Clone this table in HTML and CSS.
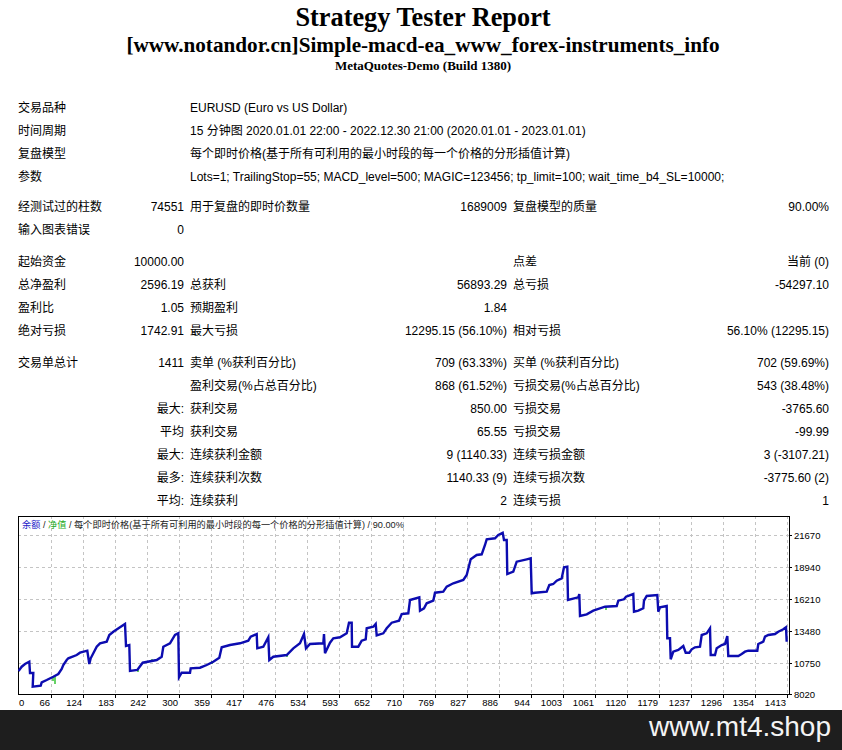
FILE: index.html
```html
<!DOCTYPE html>
<html lang="zh">
<head>
<meta charset="utf-8">
<title>Strategy Tester Report</title>
<link rel="stylesheet" href="styles.css">
</head>
<body>
<header class="report-head">
  <div class="title">Strategy Tester Report</div>
  <div class="subtitle">[www.notandor.cn]Simple-macd-ea_www_forex-instruments_info</div>
  <div class="server">MetaQuotes-Demo (Build 1380)</div>
</header>

<section class="stats">
  <div class="row"><span class="c l w2">交易品种</span><span class="c l w4">EURUSD (Euro vs US Dollar)</span></div>
  <div class="row"><span class="c l w2">时间周期</span><span class="c l w4">15 分钟图 2020.01.01 22:00 - 2022.12.30 21:00 (2020.01.01 - 2023.01.01)</span></div>
  <div class="row"><span class="c l w2">复盘模型</span><span class="c l w4">每个即时价格(基于所有可利用的最小时段的每一个价格的分形插值计算)</span></div>
  <div class="row"><span class="c l w2">参数</span><span class="c l w4">Lots=1; TrailingStop=55; MACD_level=500; MAGIC=123456; tp_limit=100; wait_time_b4_SL=10000;</span></div>
  <div class="gap g7"></div>
  <div class="row"><span class="c l">经测试过的柱数</span><span class="c r">74551</span><span class="c l">用于复盘的即时价数量</span><span class="c r">1689009</span><span class="c l">复盘模型的质量</span><span class="c r">90.00%</span></div>
  <div class="row"><span class="c l">输入图表错误</span><span class="c r">0</span></div>
  <div class="gap g9"></div>
  <div class="row"><span class="c l">起始资金</span><span class="c r">10000.00</span><span class="c l"></span><span class="c r"></span><span class="c l">点差</span><span class="c r">当前 (0)</span></div>
  <div class="row"><span class="c l">总净盈利</span><span class="c r">2596.19</span><span class="c l">总获利</span><span class="c r">56893.29</span><span class="c l">总亏损</span><span class="c r">-54297.10</span></div>
  <div class="row"><span class="c l">盈利比</span><span class="c r">1.05</span><span class="c l">预期盈利</span><span class="c r">1.84</span><span class="c l"></span><span class="c r"></span></div>
  <div class="row"><span class="c l">绝对亏损</span><span class="c r">1742.91</span><span class="c l">最大亏损</span><span class="c r">12295.15 (56.10%)</span><span class="c l">相对亏损</span><span class="c r">56.10% (12295.15)</span></div>
  <div class="gap g9"></div>
  <div class="row"><span class="c l">交易单总计</span><span class="c r">1411</span><span class="c l">卖单 (%获利百分比)</span><span class="c r">709 (63.33%)</span><span class="c l">买单 (%获利百分比)</span><span class="c r">702 (59.69%)</span></div>
  <div class="row"><span class="c l"></span><span class="c r"></span><span class="c l">盈利交易(%占总百分比)</span><span class="c r">868 (61.52%)</span><span class="c l">亏损交易(%占总百分比)</span><span class="c r">543 (38.48%)</span></div>
  <div class="row"><span class="c l"></span><span class="c r">最大:</span><span class="c l">获利交易</span><span class="c r">850.00</span><span class="c l">亏损交易</span><span class="c r">-3765.60</span></div>
  <div class="row"><span class="c l"></span><span class="c r">平均</span><span class="c l">获利交易</span><span class="c r">65.55</span><span class="c l">亏损交易</span><span class="c r">-99.99</span></div>
  <div class="row"><span class="c l"></span><span class="c r">最大:</span><span class="c l">连续获利金额</span><span class="c r">9 (1140.33)</span><span class="c l">连续亏损金额</span><span class="c r">3 (-3107.21)</span></div>
  <div class="row"><span class="c l"></span><span class="c r">最多:</span><span class="c l">连续获利次数</span><span class="c r">1140.33 (9)</span><span class="c l">连续亏损次数</span><span class="c r">-3775.60 (2)</span></div>
  <div class="row"><span class="c l"></span><span class="c r">平均:</span><span class="c l">连续获利</span><span class="c r">2</span><span class="c l">连续亏损</span><span class="c r">1</span></div>
</section>

<section class="chart">
<svg class="chart-svg" width="824" height="194" viewBox="0 0 824 194" xmlns="http://www.w3.org/2000/svg">
  <g class="grid">
    <line x1="0" y1="19.5" x2="771" y2="19.5"/>
    <line x1="0" y1="51.5" x2="771" y2="51.5"/>
    <line x1="0" y1="83.5" x2="771" y2="83.5"/>
    <line x1="0" y1="115.5" x2="771" y2="115.5"/>
    <line x1="0" y1="147.5" x2="771" y2="147.5"/>
    <line x1="33.5" y1="0" x2="33.5" y2="179"/>
    <line x1="65.5" y1="0" x2="65.5" y2="179"/>
    <line x1="97.5" y1="0" x2="97.5" y2="179"/>
    <line x1="129.5" y1="0" x2="129.5" y2="179"/>
    <line x1="161.5" y1="0" x2="161.5" y2="179"/>
    <line x1="193.5" y1="0" x2="193.5" y2="179"/>
    <line x1="225.5" y1="0" x2="225.5" y2="179"/>
    <line x1="257.5" y1="0" x2="257.5" y2="179"/>
    <line x1="289.5" y1="0" x2="289.5" y2="179"/>
    <line x1="321.5" y1="0" x2="321.5" y2="179"/>
    <line x1="353.5" y1="0" x2="353.5" y2="179"/>
    <line x1="385.5" y1="0" x2="385.5" y2="179"/>
    <line x1="417.5" y1="0" x2="417.5" y2="179"/>
    <line x1="449.5" y1="0" x2="449.5" y2="179"/>
    <line x1="481.5" y1="0" x2="481.5" y2="179"/>
    <line x1="513.5" y1="0" x2="513.5" y2="179"/>
    <line x1="545.5" y1="0" x2="545.5" y2="179"/>
    <line x1="577.5" y1="0" x2="577.5" y2="179"/>
    <line x1="609.5" y1="0" x2="609.5" y2="179"/>
    <line x1="641.5" y1="0" x2="641.5" y2="179"/>
    <line x1="673.5" y1="0" x2="673.5" y2="179"/>
    <line x1="705.5" y1="0" x2="705.5" y2="179"/>
    <line x1="737.5" y1="0" x2="737.5" y2="179"/>
    <line x1="769.5" y1="0" x2="769.5" y2="179"/>
  </g>
  <g class="ticks">
    <line x1="771" y1="19.5" x2="774" y2="19.5"/>
    <line x1="771" y1="51.5" x2="774" y2="51.5"/>
    <line x1="771" y1="83.5" x2="774" y2="83.5"/>
    <line x1="771" y1="115.5" x2="774" y2="115.5"/>
    <line x1="771" y1="147.5" x2="774" y2="147.5"/>
    <line x1="771" y1="178.5" x2="774" y2="178.5"/>
    <line x1="33.5" y1="179" x2="33.5" y2="182"/>
    <line x1="65.5" y1="179" x2="65.5" y2="182"/>
    <line x1="97.5" y1="179" x2="97.5" y2="182"/>
    <line x1="129.5" y1="179" x2="129.5" y2="182"/>
    <line x1="161.5" y1="179" x2="161.5" y2="182"/>
    <line x1="193.5" y1="179" x2="193.5" y2="182"/>
    <line x1="225.5" y1="179" x2="225.5" y2="182"/>
    <line x1="257.5" y1="179" x2="257.5" y2="182"/>
    <line x1="289.5" y1="179" x2="289.5" y2="182"/>
    <line x1="321.5" y1="179" x2="321.5" y2="182"/>
    <line x1="353.5" y1="179" x2="353.5" y2="182"/>
    <line x1="385.5" y1="179" x2="385.5" y2="182"/>
    <line x1="417.5" y1="179" x2="417.5" y2="182"/>
    <line x1="449.5" y1="179" x2="449.5" y2="182"/>
    <line x1="481.5" y1="179" x2="481.5" y2="182"/>
    <line x1="513.5" y1="179" x2="513.5" y2="182"/>
    <line x1="545.5" y1="179" x2="545.5" y2="182"/>
    <line x1="577.5" y1="179" x2="577.5" y2="182"/>
    <line x1="609.5" y1="179" x2="609.5" y2="182"/>
    <line x1="641.5" y1="179" x2="641.5" y2="182"/>
    <line x1="673.5" y1="179" x2="673.5" y2="182"/>
    <line x1="705.5" y1="179" x2="705.5" y2="182"/>
    <line x1="737.5" y1="179" x2="737.5" y2="182"/>
    <line x1="769.5" y1="179" x2="769.5" y2="182"/>
  </g>
  <rect class="frame" x="0.5" y="0.5" width="771" height="178"/>
  <g transform="translate(-18,-516)">
    <g class="equity">
      <line x1="55" y1="675" x2="55" y2="684"/>
      <line x1="53" y1="676" x2="53" y2="681"/>
      <line x1="138" y1="669" x2="138" y2="672"/>
      <line x1="152" y1="659" x2="152" y2="662"/>
      <line x1="212" y1="661" x2="212" y2="664"/>
      <line x1="287" y1="654" x2="287" y2="657"/>
      <line x1="606" y1="607" x2="606" y2="610"/>
    </g>
    <polyline class="balance" points="18.5,671 21.7,666.7 25,664 29.3,661.7 30,673 33.3,673 32.7,686.7 40.7,685.7 41.7,682.3 46.7,680 53.3,676.7 58.3,674 61.7,669 63.3,665 66.7,660 68.3,658.3 76.7,655 80,652.7 87.3,650.7 89.3,664 90.7,658.3 96.7,646.7 100,643.3 106.7,641.7 109.3,635 113.3,631.7 120,627.3 125,624 126,646 129.3,645 130,671 137.3,670 142.7,662.7 156.7,660 161.7,656.7 163.3,646.7 170,643.3 175,635 178.3,633.3 179,677.3 181.7,672.7 190,672.7 190.7,668.3 200,667.7 206.7,665 213.3,661.7 219.3,657.7 221.7,647.3 230,645 240,643.3 248.3,640.7 250.7,636.7 256.7,634 257.3,648.3 263.3,646.7 268.3,637.3 269.3,660 273.3,656.7 286.7,655 293.3,648.3 300,643.3 304,634 306,648.3 310,644 323.3,643.3 324,634 325,653.3 330,642.7 333.3,638.3 340,637.3 346.7,633.3 349,622.7 351.7,622.7 352,646.7 358.3,646.7 361.7,640.7 365.7,639.3 366.7,628.3 373.3,626.7 375.7,624 376.7,635.3 383.3,633.3 386.7,628.3 391.7,622.7 399,620.7 401.7,614 408.3,613.3 410,600 419.3,597.3 420,610.7 424,608.3 426.7,603.3 433.3,600.7 435,592.7 443.3,591.7 446.7,586.7 453.3,583.3 463.3,580 466.7,575 470.7,559.3 476.7,555 481.7,554.3 485,545 486.7,539.3 495,538.3 498.3,535 502.7,532.7 504,540 506.7,540 507.3,574 513.3,571.7 516.7,561.7 526.7,559.3 530.7,558.3 531.7,593.3 535,592.7 546.7,591.7 549.3,585 553.3,584 556.7,580.7 561.7,578.3 564,567.3 567.3,566.7 568,600 578.3,597.3 579.3,594 580,616 586.7,614.3 593.3,610.7 605,606.7 616.7,606 618.3,600.7 624,599.3 626,596.7 633.3,594 634,611.7 638.3,610.7 643.3,608.3 644,600.7 646.7,596 657.3,595 658.3,611.7 660,607.3 666.7,606 667.3,638.3 670,638.3 670.7,659.3 673.3,651.7 678.3,650 683.3,646 685.7,652.7 689.3,652.7 691.7,649.3 695,647.3 700,646.7 701.7,635 706.7,633.3 710,628.3 710.7,655 715,655 716.7,648.3 721.7,645 725,644 727.3,636 728.3,656 738.3,656 741.7,654 745,651.7 748.3,650.7 757.3,650.7 758.3,644 763.3,641.7 765,636.7 768.3,635 775,634 778.3,631.7 783.3,629.3 786,627.3 786.7,641.7"/>
  </g>
  <text class="legend" x="4" y="12"><tspan class="lg-bal">余额</tspan> / <tspan class="lg-eq">净值</tspan> / 每个即时价格(基于所有可利用的最小时段的每一个价格的分形插值计算) / 90.00%</text>
  <g class="ylabels">
    <text x="776" y="22.5">21670</text>
    <text x="776" y="54.5">18940</text>
    <text x="776" y="86.5">16210</text>
    <text x="776" y="118.5">13480</text>
    <text x="776" y="150.5">10750</text>
    <text x="776" y="182">8020</text>
  </g>
  <g class="xlabels">
    <text class="first" x="1" y="190">0</text>
    <text x="32" y="190">66</text>
    <text x="64" y="190">124</text>
    <text x="96" y="190">183</text>
    <text x="128" y="190">242</text>
    <text x="160" y="190">300</text>
    <text x="192" y="190">359</text>
    <text x="224" y="190">417</text>
    <text x="256" y="190">476</text>
    <text x="288" y="190">534</text>
    <text x="320" y="190">593</text>
    <text x="352" y="190">652</text>
    <text x="384" y="190">710</text>
    <text x="416" y="190">769</text>
    <text x="448" y="190">827</text>
    <text x="480" y="190">886</text>
    <text x="512" y="190">944</text>
    <text x="544" y="190">1003</text>
    <text x="576" y="190">1061</text>
    <text x="608" y="190">1120</text>
    <text x="640" y="190">1179</text>
    <text x="672" y="190">1237</text>
    <text x="704" y="190">1296</text>
    <text x="736" y="190">1354</text>
    <text x="768" y="190">1413</text>
  </g>
</svg>
</section>

<footer class="brand-bar">www.mt4.shop</footer>
</body>
</html>
```

FILE: styles.css
```css
html, body {
  margin: 0;
  padding: 0;
  background: #ffffff;
}

body {
  width: 842px;
  height: 750px;
  overflow: hidden;
  color: #000;
  font-family: "Liberation Sans", "Noto Sans CJK SC", sans-serif;
  font-size: 12px;
}

.report-head {
  padding-left: 4px;
  text-align: center;
  font-family: "Liberation Serif", "Noto Sans CJK SC", serif;
  font-weight: bold;
  height: 97px;
}

.title {
  font-size: 26.3px;
  line-height: 36px;
}

.subtitle {
  font-size: 21.2px;
  line-height: 19px;
}

.server {
  font-size: 13px;
  line-height: 22px;
}

.stats {
  margin-left: 15px;
  width: 817px;
}

.row {
  display: grid;
  grid-template-columns: 100px 72px 133px 190px 130px 192px;
  height: 23px;
  line-height: 23px;
}

.c {
  padding: 0 3px;
  white-space: nowrap;
}

.l { text-align: left; }
.r { text-align: right; }

.w2 { grid-column: 1 / span 2; }
.w4 { grid-column: 3 / span 4; }

.gap.g7 { height: 7px; }
.gap.g9 { height: 9px; }

.chart {
  margin-left: 18px;
  margin-top: 3px;
  height: 194px;
}

.chart-svg {
  display: block;
}

.grid line {
  stroke: #c4c4c4;
  stroke-width: 1;
  stroke-dasharray: 3 3;
}

.ticks line {
  stroke: #000;
  stroke-width: 1;
}

.frame {
  fill: none;
  stroke: #000;
  stroke-width: 1;
}

.balance {
  fill: none;
  stroke: #0c0cb0;
  stroke-width: 2.4;
  stroke-linejoin: miter;
}

.equity line {
  stroke: #00b400;
  stroke-width: 1.2;
}

.legend {
  font-family: "Liberation Sans", "Noto Sans CJK SC", sans-serif;
  font-size: 9.2px;
  fill: #222;
}

.lg-bal { fill: #1a1ac8; }
.lg-eq { fill: #1eaa1e; }

.ylabels text,
.xlabels text {
  font-family: "Liberation Sans", sans-serif;
  font-size: 9.5px;
  fill: #000;
}

.xlabels text {
  text-anchor: end;
}

.xlabels text.first {
  text-anchor: start;
}

.brand-bar {
  height: 40px;
  background: #1e1e1e;
  color: #f4f4f4;
  font-family: "Liberation Sans", sans-serif;
  font-size: 28px;
  line-height: 34px;
  text-align: right;
  padding-right: 11px;
}
```
